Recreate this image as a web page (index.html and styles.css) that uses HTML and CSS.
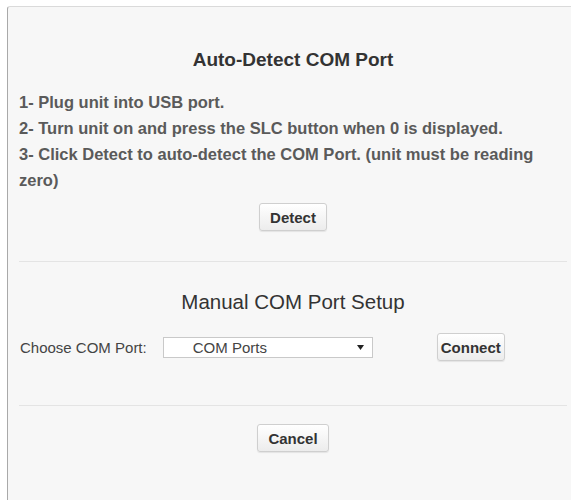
FILE: index.html
```html
<!DOCTYPE html>
<html lang="en">
<head>
<meta charset="utf-8">
<title>COM Port Setup</title>
<link rel="stylesheet" href="styles.css">
</head>
<body>
<div class="panel">
  <section class="auto">
    <h2 class="auto-title">Auto-Detect COM Port</h2>
    <p class="steps">1- Plug unit into USB port.<br>2- Turn unit on and press the SLC button when 0 is displayed.<br>3- Click Detect to auto-detect the COM Port. (unit must be reading zero)</p>
    <div class="center">
      <button class="btn btn-wide" type="button">Detect</button>
    </div>
  </section>
  <hr class="divider">
  <section class="manual">
    <h3 class="manual-title">Manual COM Port Setup</h3>
    <div class="port-row">
      <label class="port-label" for="port">Choose COM Port:</label>
      <div class="select-wrap">
        <select id="port" class="port-select">
          <option>COM Ports</option>
        </select>
        <svg class="select-arrow" width="7" height="5" viewBox="0 0 7 5" aria-hidden="true"><path d="M0 0H7L3.5 5Z" fill="#222"/></svg>
      </div>
      <button class="btn btn-narrow" type="button">Connect</button>
    </div>
  </section>
  <hr class="divider divider-bottom">
  <div class="center">
    <button class="btn btn-wide" type="button">Cancel</button>
  </div>
</div>
</body>
</html>
```

FILE: styles.css
```css
html, body {
  margin: 0;
  padding: 0;
  background: #ffffff;
  overflow: hidden;
  height: 100%;
}

body {
  font-family: "Liberation Sans", Arial, sans-serif;
  color: #333;
  padding-top: 6px;
  box-sizing: border-box;
}

/* dialog surface; it runs on past the right and bottom edges of the window */
.panel {
  box-sizing: border-box;
  width: 564px;
  height: 100%;
  margin-left: 7px;
  padding: 0 4px 0 11px;
  background: #f7f7f7;
  border-top: 1px solid #dadada;
  border-left: 1px solid #a9a9a9;
  border-top-left-radius: 3px;
  overflow: hidden;
}

.auto-title {
  margin: 42px 0 0;
  font-size: 19px;
  line-height: 22px;
  font-weight: bold;
  text-align: center;
  color: #333;
}

.steps {
  margin: 18px 0 0;
  font-size: 16.5px;
  line-height: 26px;
  font-weight: bold;
  color: #5a5a5a;
}

.center {
  display: flex;
  justify-content: center;
}

.auto .center {
  margin-top: 10px;
}

.btn {
  height: 28px;
  font-family: "Liberation Sans", Arial, sans-serif;
  font-size: 15px;
  font-weight: bold;
  color: #333;
  background: linear-gradient(#ffffff, #ececec);
  border: 1px solid #cfcfcf;
  border-radius: 3px;
  box-shadow: 0 1px 1px rgba(0, 0, 0, 0.08);
}

.btn-wide {
  padding: 0 10px;
}

.btn-narrow {
  padding: 0 3px;
}

.divider {
  margin: 30px 0 0;
  border: 0;
  border-top: 1px solid #e4e4e4;
  height: 0;
}

.manual-title {
  margin: 28px 0 0;
  font-size: 20.5px;
  line-height: 24px;
  font-weight: normal;
  text-align: center;
  color: #333;
}

.port-row {
  display: flex;
  align-items: center;
  height: 28px;
  margin-top: 19px;
}

.port-label {
  margin-left: 1px;
  font-size: 15px;
  color: #444;
}

.select-wrap {
  position: relative;
  margin-left: 16px;
  width: 210px;
  height: 21px;
}

.port-select {
  appearance: none;
  -webkit-appearance: none;
  box-sizing: border-box;
  width: 100%;
  height: 100%;
  margin: 0;
  padding: 0 0 0 29px;
  font-family: "Liberation Sans", Arial, sans-serif;
  font-size: 15px;
  color: #444;
  background: #fff;
  border: 1px solid #c9c9c9;
  border-radius: 0;
}

.select-arrow {
  position: absolute;
  right: 9px;
  top: 8px;
  pointer-events: none;
}

.port-row .btn {
  margin-left: 64px;
}

.divider-bottom {
  margin-top: 44px;
}

.divider-bottom + .center {
  margin-top: 18px;
}
```
